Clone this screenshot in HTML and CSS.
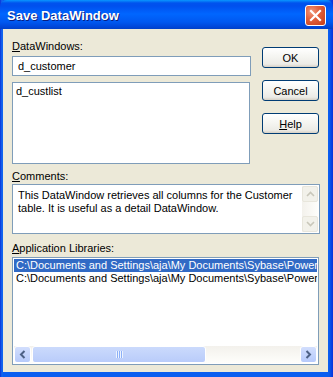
FILE: index.html
```html
<!DOCTYPE html>
<html>
<head>
<meta charset="utf-8">
<link rel="stylesheet" href="styles.css">
</head>
<body>
<div class="window">
  <div class="titlebar">
    <span class="title">Save DataWindow</span>
    <div class="close">
      <svg width="13" height="13" viewBox="0 0 13 13"><path d="M2 2 L11 11 M11 2 L2 11" stroke="#fff" stroke-width="2.2" stroke-linecap="square"/></svg>
    </div>
  </div>
  <div class="client">
    <div class="top">
      <div class="leftcol">
        <div class="label lbl-dw"><u>D</u>ataWindows:</div>
        <div class="edit">d_customer</div>
        <div class="listbox dwlist"><div class="item">d_custlist</div></div>
      </div>
      <div class="buttons">
        <div class="btn">OK</div>
        <div class="btn">Cancel</div>
        <div class="btn"><u>H</u>elp</div>
      </div>
    </div>
    <div class="label lbl-cm"><u>C</u>omments:</div>
    <div class="comments">
      <div class="ctext">This DataWindow retrieves all columns for the Customer table. It is useful as a detail DataWindow.</div>
      <div class="vscroll">
        <div class="varrow"><svg width="9" height="6" viewBox="0 0 9 6"><path d="M1 5 L4.5 1.5 L8 5" fill="none" stroke="#c9c7ba" stroke-width="1.6"/></svg></div>
        <div class="vtrack"></div>
        <div class="varrow"><svg width="9" height="6" viewBox="0 0 9 6"><path d="M1 1 L4.5 4.5 L8 1" fill="none" stroke="#c9c7ba" stroke-width="1.6"/></svg></div>
      </div>
    </div>
    <div class="label lbl-al"><u>A</u>pplication Libraries:</div>
    <div class="libs">
      <div class="rows">
        <div class="row sel">C:\Documents and Settings\aja\My Documents\Sybase\PowerBuilder\Code Examples\Example App\pbexamfe.pbl</div>
        <div class="row">C:\Documents and Settings\aja\My Documents\Sybase\PowerBuilder\Code Examples\Example App\pbexamw1.pbl</div>
      </div>
      <div class="hscroll">
        <div class="harrow"><svg width="7" height="9" viewBox="0 0 7 9"><path d="M5.5 1 L2 4.5 L5.5 8" fill="none" stroke="#4d6185" stroke-width="2"/></svg></div>
        <div class="thumb"><div class="grip"></div></div>
        <div class="htrack"></div>
        <div class="harrow"><svg width="7" height="9" viewBox="0 0 7 9"><path d="M1.5 1 L5 4.5 L1.5 8" fill="none" stroke="#4d6185" stroke-width="2"/></svg></div>
      </div>
    </div>
  </div>
</div>
</body>
</html>
```
FILE: styles.css
```css
html, body { margin: 0; padding: 0; }
body { width: 333px; height: 377px; overflow: hidden; font-family: "Liberation Sans", Arial, sans-serif; font-size: 11px; color: #000; }
.window {
  width: 333px; height: 377px; box-sizing: border-box;
  background: linear-gradient(to right, #0831d9 0, #166aee 2px, #0a5ef0 3px, #0a5ef0 329px, #0831d9 333px);
  display: flex; flex-direction: column;
}
.titlebar {
  height: 29px; flex: none; display: flex; align-items: center; justify-content: space-between;
  padding: 0 7px 0 7px; box-sizing: border-box;
  background: linear-gradient(to bottom, #0997ff 0, #0053ee 3px, #0050ee 6px, #0066ff 14px, #0058f0 22px, #0046d8 27px, #0140c6 29px);
  border-radius: 7px 7px 0 0;
}
.title { color: #fff; font-weight: bold; font-size: 13px; text-shadow: 1px 1px 0 #0a1e80; margin-top: 1px; }
.close {
  width: 19px; height: 19px; border: 1px solid #fff; border-radius: 3px;
  background: radial-gradient(circle at 30% 30%, #f09a7e 0, #e2613e 40%, #c63c16 100%);
  display: flex; align-items: center; justify-content: center; margin-top: 2px; margin-right: 0px;
}
.client {
  flex: 1; margin: 0 5px 5px 3px; background: #ece9d8;
  padding: 11px 0 0 9px; box-sizing: border-box;
  display: flex; flex-direction: column;
}
.top { display: flex; }
.leftcol { display: flex; flex-direction: column; width: 239px; }
.label { height: 13px; line-height: 13px; }
.edit {
  margin-top: 3px; height: 20px; width: 239px; box-sizing: border-box;
  border: 1px solid #7f9db9; background: #fff; padding: 0 0 0 5px; line-height: 18px;
}
.listbox { background: #fff; border: 1px solid #7f9db9; box-sizing: border-box; }
.dwlist { margin-top: 6px; height: 82px; width: 238px; padding: 2px 3px; }
.item { line-height: 13px; }
.buttons { display: flex; flex-direction: column; gap: 12px; margin-left: 11px; margin-top: 7px; }
.btn {
  width: 57px; height: 21px; box-sizing: border-box;
  border: 1px solid #003c74; border-radius: 3px;
  background: linear-gradient(to bottom, #fff 0, #f4f4f0 50%, #ecebe6 85%, #d6d0c5 100%);
  display: flex; align-items: center; justify-content: center;
}
.lbl-cm { margin-top: 6px; }
.comments {
  margin-top: 1px; width: 308px; height: 50px; box-sizing: border-box;
  border: 1px solid #7f9db9; background: #fff; display: flex;
}
.ctext { flex: 1; padding: 4px 0 0 5px; line-height: 13px; }
.vscroll { width: 16px; display: flex; flex-direction: column; background: linear-gradient(to right, #f3f1ec, #fefefb); margin: 1px 1px 1px 0; }
.varrow {
  height: 16px; box-sizing: border-box; border: 1px solid #e8e6dc; border-radius: 2px;
  background: #f2f1ea; display: flex; align-items: center; justify-content: center;
}
.vtrack { flex: 1; }
.lbl-al { margin-top: 8px; }
.libs {
  margin-top: 2px; width: 307px; height: 108px; box-sizing: border-box;
  border: 1px solid #7f9db9; background: #fff; display: flex; flex-direction: column; padding: 1px;
}
.rows { flex: 1; overflow: hidden; }
.row { white-space: nowrap; line-height: 13px; height: 13px; padding-left: 2px; overflow: hidden; }
.row.sel { background: #316ac5; color: #fff; }
.hscroll { height: 17px; display: flex; background: linear-gradient(to bottom, #f3f1ec, #fefefb); }
.harrow {
  width: 17px; box-sizing: border-box; border: 1px solid #fff; border-radius: 3px;
  background: linear-gradient(to bottom, #d2defd, #b6cafb);
  display: flex; align-items: center; justify-content: center;
}
.thumb {
  width: 174px; margin-left: 1px; box-sizing: border-box; border: 1px solid #fff; border-radius: 3px;
  background: linear-gradient(to bottom, #cbdafc, #b9ccfa);
  display: flex; align-items: center; justify-content: center;
}
.grip { width: 7px; height: 7px; background: repeating-linear-gradient(to right, #eef4fe 0, #eef4fe 1px, #8cb0f8 1px, #8cb0f8 2px); }
.htrack { flex: 1; }
u { text-decoration: underline; text-underline-offset: 1px; }
```
